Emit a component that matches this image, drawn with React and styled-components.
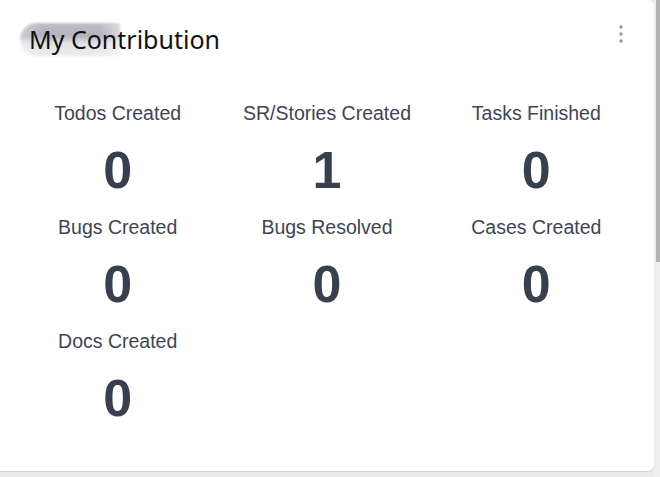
import React from "react";
import styled, { createGlobalStyle } from "styled-components";

const Global = createGlobalStyle`
  html, body { margin: 0; padding: 0; background: #ececec; }
  #root { width: 660px; height: 477px; }
`;

const Page = styled.div`
  display: flex;
  width: 660px;
  height: 477px;
  align-items: flex-start;
`;

const Card = styled.section`
  position: relative;
  width: 654px;
  height: 471px;
  background: #ffffff;
  border-radius: 0 6px 6px 0;
  box-shadow: 0 1px 1px rgba(0, 0, 0, 0.12);
  box-sizing: border-box;
  padding: 0 13px;
  display: flex;
  flex-direction: column;
`;

const Header = styled.header`
  position: relative;
  display: flex;
  align-items: center;
  justify-content: space-between;
  height: 80px;
  padding: 0 0 0 17px;
`;

const Blur = styled.div`
  position: absolute;
  left: 7px;
  top: 23px;
  width: 100px;
  height: 33px;
  border-radius: 17px 0 0 17px;
  background:
    linear-gradient(90deg, rgba(255,255,255,0.35) 0%, rgba(255,255,255,0) 20%, rgba(255,255,255,0) 80%, rgba(255,255,255,0.5) 100%),
    linear-gradient(180deg, #bebec8 0%, #b3b3c0 40%, #e4e4e7 62%, #ececee 100%);
  filter: blur(1px);
`;

const Title = styled.h2`
  position: relative;
  margin: 0;
  margin-top: -2px;
  margin-left: -1px;
  font-family: "Noto Sans", "Open Sans", sans-serif;
  font-weight: 400;
  font-size: 25px;
  color: #111;
  letter-spacing: 0;
`;

const Kebab = styled.button`
  border: 0;
  background: transparent;
  padding: 0;
  margin-right: 15px;
  margin-top: -12px;
  width: 10px;
  height: 24px;
  display: flex;
  align-items: center;
  justify-content: center;
  cursor: pointer;
`;

const Grid = styled.div`
  display: grid;
  grid-template-columns: repeat(3, 1fr);
  row-gap: 15px;
  padding-top: 21px;
`;

const Stat = styled.div`
  display: flex;
  flex-direction: column;
  align-items: center;
  gap: 15px;
`;

const Label = styled.div`
  font-family: "Liberation Sans", Arial, sans-serif;
  font-size: 19.5px;
  line-height: 24px;
  color: #3d4557;
`;

const Value = styled.div`
  font-family: "Liberation Sans", Arial, sans-serif;
  font-weight: 700;
  font-size: 52px;
  line-height: 60px;
  color: #38404f;
`;

const Track = styled.div`
  width: 6px;
  height: 477px;
  background: #efefef;
  display: flex;
  justify-content: flex-end;
`;

const Thumb = styled.div`
  width: 4px;
  height: 262px;
  background: #b2b2b2;
`;

const stats = [
  ["Todos Created", 0],
  ["SR/Stories Created", 1],
  ["Tasks Finished", 0],
  ["Bugs Created", 0],
  ["Bugs Resolved", 0],
  ["Cases Created", 0],
  ["Docs Created", 0],
];

export default function App() {
  return (
    <>
      <Global />
      <Page>
        <Card>
          <Header>
            <Blur />
            <Title>My Contribution</Title>
            <Kebab aria-label="more">
              <svg width="4" height="18" viewBox="0 0 4 18">
                <circle cx="2" cy="2" r="1.7" fill="#9099ab" />
                <circle cx="2" cy="9" r="1.7" fill="#9099ab" />
                <circle cx="2" cy="16" r="1.7" fill="#9099ab" />
              </svg>
            </Kebab>
          </Header>
          <Grid>
            {stats.map(([label, value]) => (
              <Stat key={label}>
                <Label>{label}</Label>
                <Value>{value}</Value>
              </Stat>
            ))}
          </Grid>
        </Card>
        <Track>
          <Thumb />
        </Track>
      </Page>
    </>
  );
}
